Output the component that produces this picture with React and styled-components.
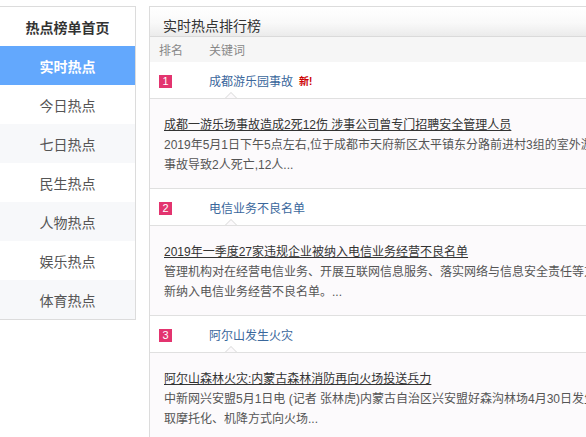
import React from "react";
import styled, { createGlobalStyle } from "styled-components";

const Global = createGlobalStyle`
  html, body { margin: 0; padding: 0; overflow: hidden; background: #fff; }
  body { font-family: "Liberation Sans", "Noto Sans CJK SC", sans-serif; }
  * { box-sizing: border-box; }
`;

const Page = styled.div`
  display: flex;
  align-items: flex-start;
  gap: 13px;
  padding-top: 6px;
  width: 900px;
`;

const Sidebar = styled.nav`
  flex: none;
  width: 136px;
  border: 1px solid #dcdcdc;
  border-left: none;
  background: #fff;
`;

const SideHead = styled.div`
  height: 39px;
  display: flex;
  align-items: center;
  justify-content: center;
  font-size: 14px;
  font-weight: bold;
  color: #333;
`;

const SideItem = styled.div`
  height: 39px;
  display: flex;
  align-items: center;
  justify-content: center;
  font-size: 14px;
  color: ${(p) => (p.$active ? "#fff" : "#555")};
  font-weight: ${(p) => (p.$active ? "bold" : "normal")};
  background: ${(p) => (p.$active ? "#63a8fd" : p.$alt ? "#f7f8fa" : "#fff")};
`;

const Panel = styled.section`
  flex: none;
  width: 620px;
  border: 1px solid #dcdcdc;
  border-bottom: none;
  background: #fff;
`;

const PanelHead = styled.div`
  height: 30px;
  padding: 9px 0 0 13px;
  line-height: 20px;
  font-size: 14px;
  color: #333;
  background: linear-gradient(#ffffff, #f9f9f9 55%, #ebebeb);
  border-bottom: 1px solid #dadada;
`;

const ColumnRow = styled.div`
  height: 25px;
  display: flex;
  align-items: center;
  padding-left: 9px;
  background: #f6f6f6;
  font-size: 12px;
  color: #888;
`;

const RankCol = styled.div`
  width: 50px;
  flex: none;
`;

const ItemRow = styled.div`
  height: 37px;
  display: flex;
  align-items: center;
  padding-left: 9px;
  border-bottom: 1px solid #e0e0e0;
`;

const Badge = styled.span`
  display: inline-flex;
  align-items: center;
  justify-content: center;
  width: 13px;
  height: 13px;
  background: #e3346f;
  color: #fff;
  font-size: 11px;
  line-height: 1;
`;

const Keyword = styled.a`
  font-size: 12px;
  color: #3a679c;
  text-decoration: none;
`;

const NewTag = styled.sup`
  margin-left: 6px;
  font-size: 10px;
  font-weight: bold;
  color: #c00;
  vertical-align: 2px;
`;

const Detail = styled.div`
  position: relative;
  background: #fcfafc;
  padding: 16px 0 13px 14px;
  border-bottom: 1px solid #e0e0e0;
  font-size: 12px;
  line-height: 20px;

  &::before {
    content: "";
    position: absolute;
    top: -7px;
    left: 75px;
    border-left: 6px solid transparent;
    border-right: 6px solid transparent;
    border-bottom: 6px solid #d8d8d8;
  }
  &::after {
    content: "";
    position: absolute;
    top: -6px;
    left: 76px;
    border-left: 5px solid transparent;
    border-right: 5px solid transparent;
    border-bottom: 5px solid #fcfafc;
  }
`;

const DetailTitle = styled.a`
  display: block;
  color: #333;
  text-decoration: underline;
  white-space: nowrap;
`;

const DescLine = styled.div`
  color: #555;
  white-space: nowrap;
`;

const menu = ["实时热点", "今日热点", "七日热点", "民生热点", "人物热点", "娱乐热点", "体育热点"];

const items = [
  {
    rank: 1,
    keyword: "成都游乐园事故",
    isNew: true,
    title: "成都一游乐场事故造成2死12伤 涉事公司曾专门招聘安全管理人员",
    lines: [
      "2019年5月1日下午5点左右,位于成都市天府新区太平镇东分路前进村3组的室外游乐场发生一起安全事故,",
      "事故导致2人死亡,12人...",
    ],
  },
  {
    rank: 2,
    keyword: "电信业务不良名单",
    title: "2019年一季度27家违规企业被纳入电信业务经营不良名单",
    lines: [
      "管理机构对在经营电信业务、开展互联网信息服务、落实网络与信息安全责任等方面存在违规行为的企业,",
      "新纳入电信业务经营不良名单。...",
    ],
  },
  {
    rank: 3,
    keyword: "阿尔山发生火灾",
    title: "阿尔山森林火灾:内蒙古森林消防再向火场投送兵力",
    lines: [
      "中新网兴安盟5月1日电 (记者 张林虎)内蒙古自治区兴安盟好森沟林场4月30日发生森林火灾,",
      "取摩托化、机降方式向火场...",
    ],
  },
];

export default function App() {
  return (
    <>
      <Global />
      <Page>
        <Sidebar>
          <SideHead>热点榜单首页</SideHead>
          {menu.map((m, i) => (
            <SideItem key={m} $active={i === 0} $alt={i % 2 === 0}>
              {m}
            </SideItem>
          ))}
        </Sidebar>
        <Panel>
          <PanelHead>实时热点排行榜</PanelHead>
          <ColumnRow>
            <RankCol>排名</RankCol>
            <div>关键词</div>
          </ColumnRow>
          {items.map((it) => (
            <React.Fragment key={it.rank}>
              <ItemRow>
                <RankCol>
                  <Badge>{it.rank}</Badge>
                </RankCol>
                <Keyword>{it.keyword}</Keyword>
                {it.isNew && <NewTag>新!</NewTag>}
              </ItemRow>
              <Detail>
                <DetailTitle>{it.title}</DetailTitle>
                {it.lines.map((l) => (
                  <DescLine key={l}>{l}</DescLine>
                ))}
              </Detail>
            </React.Fragment>
          ))}
        </Panel>
      </Page>
    </>
  );
}
